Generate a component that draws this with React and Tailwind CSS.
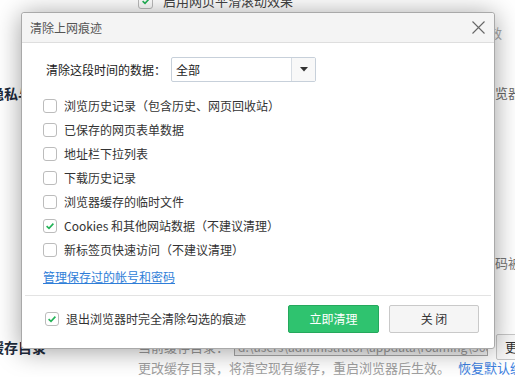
const ITEMS = [
  { label: '浏览历史记录（包含历史、网页回收站）', checked: false },
  { label: '已保存的网页表单数据', checked: false },
  { label: '地址栏下拉列表', checked: false },
  { label: '下载历史记录', checked: false },
  { label: '浏览器缓存的临时文件', checked: false },
  { label: 'Cookies 和其他网站数据（不建议清理）', checked: true },
  { label: '新标签页快速访问（不建议清理）', checked: false },
];

function CheckBox({ checked, size = 'w-[14px] h-[14px]' }) {
  return (
    <span
      className={`${size} shrink-0 flex items-center justify-center rounded-[3px] border border-[#bcbcbc] bg-white`}
    >
      {checked && (
        <svg width="10" height="10" viewBox="0 0 10 10">
          <path d="M1.6 5.2 L4 7.4 L8.4 2.6" fill="none" stroke="#22b357" strokeWidth="1.6" />
        </svg>
      )}
    </span>
  );
}

function Background() {
  return (
    <div className="-ml-[10px] w-[531px] -mt-[10px] flex flex-col text-[13px]">
      <div className="h-[22px] flex items-center pl-[148px] gap-[10px]">
        <CheckBox checked size="w-[15px] h-[15px]" />
        <span className="text-[#444] whitespace-nowrap">启用网页平滑滚动效果</span>
      </div>
      <div className="mt-[11px] h-[20px] flex items-center justify-end pr-[19px] text-[#aaa] whitespace-nowrap">
        修改此项设置需要重启浏览器后生效
      </div>
      <div className="mt-[40px] h-[20px] flex items-center justify-between whitespace-nowrap">
        <span className="shrink-0 text-[14px] font-bold text-[#1e2b3c]">隐私与安全</span>
        <span className="shrink-0 text-[#666]">清除上网痕迹时，同时清理以及关闭浏览器</span>
      </div>
      <div className="mt-[150px] h-[20px] flex items-center justify-end text-[#777] whitespace-nowrap">
        保存帐号和密码，防止密码被
      </div>
      <div className="mt-[61px] h-[26px] flex items-center whitespace-nowrap">
        <span className="shrink-0 w-[148px] text-[14px] font-bold text-[#1e2b3c]">缓存目录</span>
        <span className="shrink-0 w-[91px] text-[#9a9a9a]">当前缓存目录：</span>
        <span className="shrink-0 ml-[5px] w-[254px] h-[18px] border border-[#a8a8a8] bg-[#f2f2f2] text-[#999] text-[12px] leading-[16px] px-[3px] overflow-hidden">
          d:\users\administrator\appdata\roaming\360se6
        </span>
        <span className="shrink-0 ml-[8px] h-[26px] px-[8px] border border-[#c8c8c8] rounded-[2px] bg-[#f8f8f8] text-[#333] flex items-center">
          更改
        </span>
      </div>
      <div className="h-[16px] flex items-center pl-[148px] whitespace-nowrap">
        <span className="shrink-0 text-[#a0a0a0]">更改缓存目录，将清空现有缓存，重启浏览器后生效。</span>
        <span className="shrink-0 ml-[8px] text-[#3d7fe0]">恢复默认缓存目录</span>
      </div>
    </div>
  );
}

function ClearDialog() {
  return (
    <div className="absolute left-[21px] top-[12px] w-[474px] h-[337px] bg-white border border-[#a9a9a9] rounded-[3px] shadow-[0_2px_26px_rgba(0,0,0,0.38)] text-[12px] text-[#333]">
      <div className="h-[30px] bg-[#f4f4f4] border-b border-[#dedede] rounded-t-[3px] flex items-center justify-between pl-[8px] pr-[9px]">
        <span className="text-[#555]">清除上网痕迹</span>
        <svg width="13" height="13" viewBox="0 0 13 13">
          <path d="M0.5 0.5 L12.5 12.5 M12.5 0.5 L0.5 12.5" stroke="#666" strokeWidth="1.1" />
        </svg>
      </div>

      <div className="mt-[14px] pl-[24px] flex items-center">
        <span className="w-[120px] whitespace-nowrap text-[#222]">清除这段时间的数据：</span>
        <div className="ml-[5px] w-[145px] h-[25px] flex border border-[#c7d0da] rounded-[2px]">
          <span className="flex-1 pl-[4px] flex items-center text-[#222]">全部</span>
          <span className="w-[24px] border-l border-[#d6dce3] bg-[#f8f8f8] flex items-center justify-center">
            <svg width="8" height="5" viewBox="0 0 8 5">
              <path d="M0 0 L8 0 L4 4.5 Z" fill="#333" />
            </svg>
          </span>
        </div>
      </div>

      <div className="mt-[12px] pl-[21px] flex flex-col">
        {ITEMS.map((item) => (
          <div key={item.label} className="h-[24px] flex items-center gap-[7px]">
            <CheckBox checked={item.checked} />
            <span className="whitespace-nowrap">{item.label}</span>
          </div>
        ))}
      </div>

      <div className="mt-[6px] pl-[21px] h-[18px] leading-[18px]">
        <span className="text-[#2f7ed8] underline">管理保存过的帐号和密码</span>
      </div>

      <div className="mt-[9px] mx-[3px] h-px bg-[#e3e3e3]" />

      <div className="mt-[9px] flex items-center justify-between pl-[23px] pr-[15px]">
        <div className="flex items-center gap-[7px]">
          <CheckBox checked />
          <span className="whitespace-nowrap">退出浏览器时完全清除勾选的痕迹</span>
        </div>
        <div className="flex gap-[10px]">
          <button
            type="button"
            className="w-[91px] h-[28px] rounded-[2px] border border-[#25a85c] bg-[#2fc36f] text-white"
          >
            立即清理
          </button>
          <button
            type="button"
            className="w-[90px] h-[28px] rounded-[2px] border border-[#c9c9c9] bg-[#f5f5f5] text-[#333]"
          >
            关 闭
          </button>
        </div>
      </div>
    </div>
  );
}

export default function App() {
  return (
    <div className="relative w-[515px] h-[377px] overflow-hidden bg-white font-['Noto_Sans_CJK_SC','Noto_Sans',sans-serif]">
      <Background />
      <ClearDialog />
    </div>
  );
}
